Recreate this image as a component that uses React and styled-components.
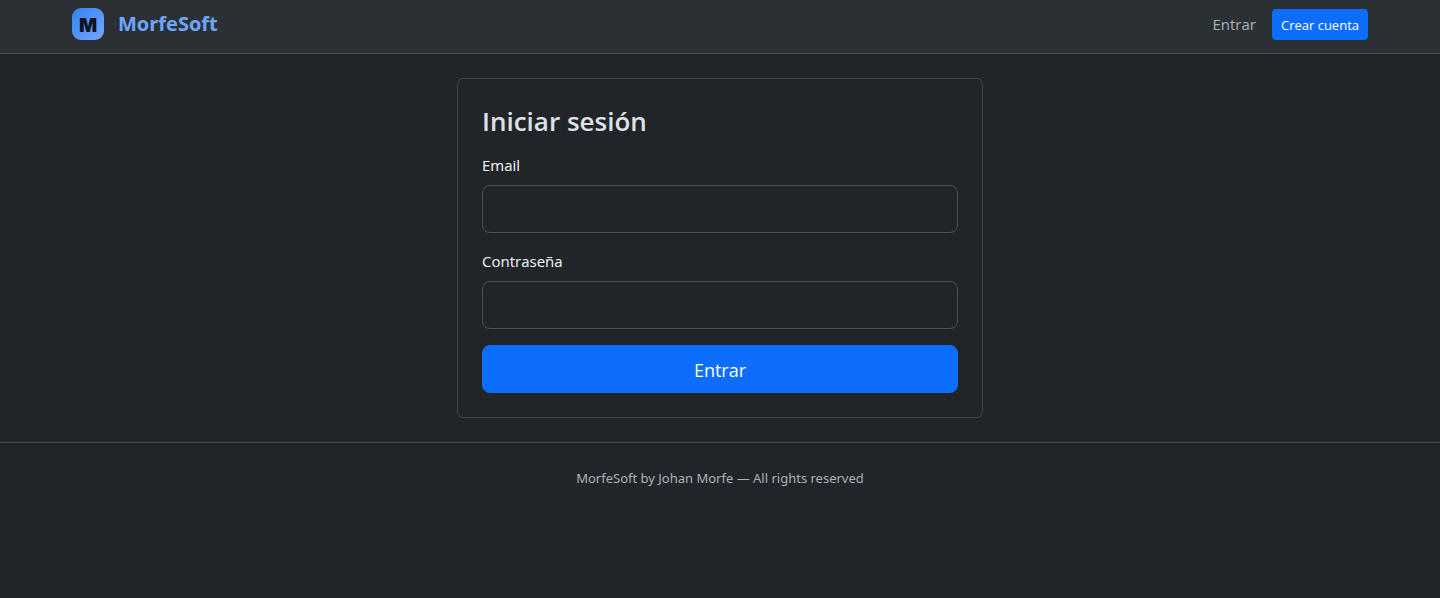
import React from "react";
import styled, { createGlobalStyle, css } from "styled-components";

const GlobalStyle = createGlobalStyle`
  *, *::before, *::after { box-sizing: border-box; }
  body {
    margin: 0;
    background: #212529;
    color: #dee2e6;
    font-family: "Segoe UI", "Open Sans", "Noto Sans", sans-serif;
    font-size: 15px;
    line-height: 24px;
  }
`;

const Header = styled.header`
  background: #2b3035;
  border-bottom: 1px solid #495057;
`;

const Nav = styled.nav`
  max-width: 1320px;
  margin: 0 auto;
  padding: 8px 12px 13px;
  display: flex;
  align-items: flex-end;
  justify-content: space-between;
`;

const Brand = styled.a`
  display: flex;
  align-items: center;
  gap: 14px;
  height: 32px;
  color: #6ea8fe;
  font-size: 20px;
  font-weight: 700;
  line-height: 32px;
  text-decoration: none;
`;

const Actions = styled.div`
  display: flex;
  align-items: center;
  gap: 16px;
`;

const NavLink = styled.a`
  color: #adb0b2;
  line-height: 22px;
  padding-bottom: 1px;
  text-decoration: none;
`;

const primary = css`
  background: #0d6efd;
  border: 1px solid #0d6efd;
  color: #fff;
  font-family: inherit;
  text-align: center;
  text-decoration: none;
  cursor: pointer;
`;

const SmallButton = styled.a`
  ${primary}
  padding: 5px 8px 3px;
  border-radius: 4px;
  font-size: 13px;
  line-height: 21px;
`;

const Main = styled.main`
  padding: 24px 12px;
`;

const Card = styled.form`
  max-width: 526px;
  margin: 0 auto;
  padding: 24px;
  border: 1px solid #424649;
  border-radius: 6px;
`;

const Title = styled.h1`
  margin: 0 0 14px;
  font-size: 26px;
  font-weight: 600;
  line-height: 36px;
`;

const Field = styled.div`
  display: flex;
  flex-direction: column;
  gap: 8px;
  margin-bottom: 16px;
`;

const Label = styled.label`
  color: #f8f9fa;
`;

const Input = styled.input`
  width: 100%;
  height: 48px;
  padding: 8px 16px;
  background: #212529;
  border: 1px solid #495057;
  border-radius: 8px;
  color: #dee2e6;
  font: inherit;
`;

const SubmitButton = styled.button`
  ${primary}
  display: block;
  width: 100%;
  height: 48px;
  padding: 9px 16px 7px;
  border-radius: 8px;
  font-size: 18px;
  line-height: 30px;
`;

const Footer = styled.footer`
  padding: 24px 12px;
  border-top: 1px solid #495057;
  color: #adb1b5;
  font-family: "Segoe UI", "Noto Sans", sans-serif;
  font-size: 13px;
  line-height: 22px;
  text-align: center;
`;

function Logo() {
  return (
    <svg width="32" height="32" viewBox="0 0 32 32" aria-hidden="true">
      <defs>
        <linearGradient id="brand" x1="0" y1="0" x2="1" y2="1">
          <stop offset="0" stopColor="#2f83fb" />
          <stop offset="1" stopColor="#79a6ff" />
        </linearGradient>
      </defs>
      <rect width="32" height="32" rx="9" fill="url(#brand)" />
      <text
        x="16"
        y="24"
        textAnchor="middle"
        fontFamily="Inter, sans-serif"
        fontSize="19"
        fontWeight="900"
        fill="#0b1220"
      >
        M
      </text>
    </svg>
  );
}

export default function App() {
  return (
    <>
      <GlobalStyle />
      <Header>
        <Nav>
          <Brand href="#inicio">
            <Logo />
            <span>MorfeSoft</span>
          </Brand>
          <Actions>
            <NavLink href="#entrar">Entrar</NavLink>
            <SmallButton href="#crear-cuenta">Crear cuenta</SmallButton>
          </Actions>
        </Nav>
      </Header>
      <Main>
        <Card onSubmit={(event) => event.preventDefault()}>
          <Title>Iniciar sesión</Title>
          <Field>
            <Label htmlFor="email">Email</Label>
            <Input id="email" type="email" />
          </Field>
          <Field>
            <Label htmlFor="password">Contraseña</Label>
            <Input id="password" type="password" />
          </Field>
          <SubmitButton type="submit">Entrar</SubmitButton>
        </Card>
      </Main>
      <Footer>MorfeSoft by Johan Morfe — All rights reserved</Footer>
    </>
  );
}
